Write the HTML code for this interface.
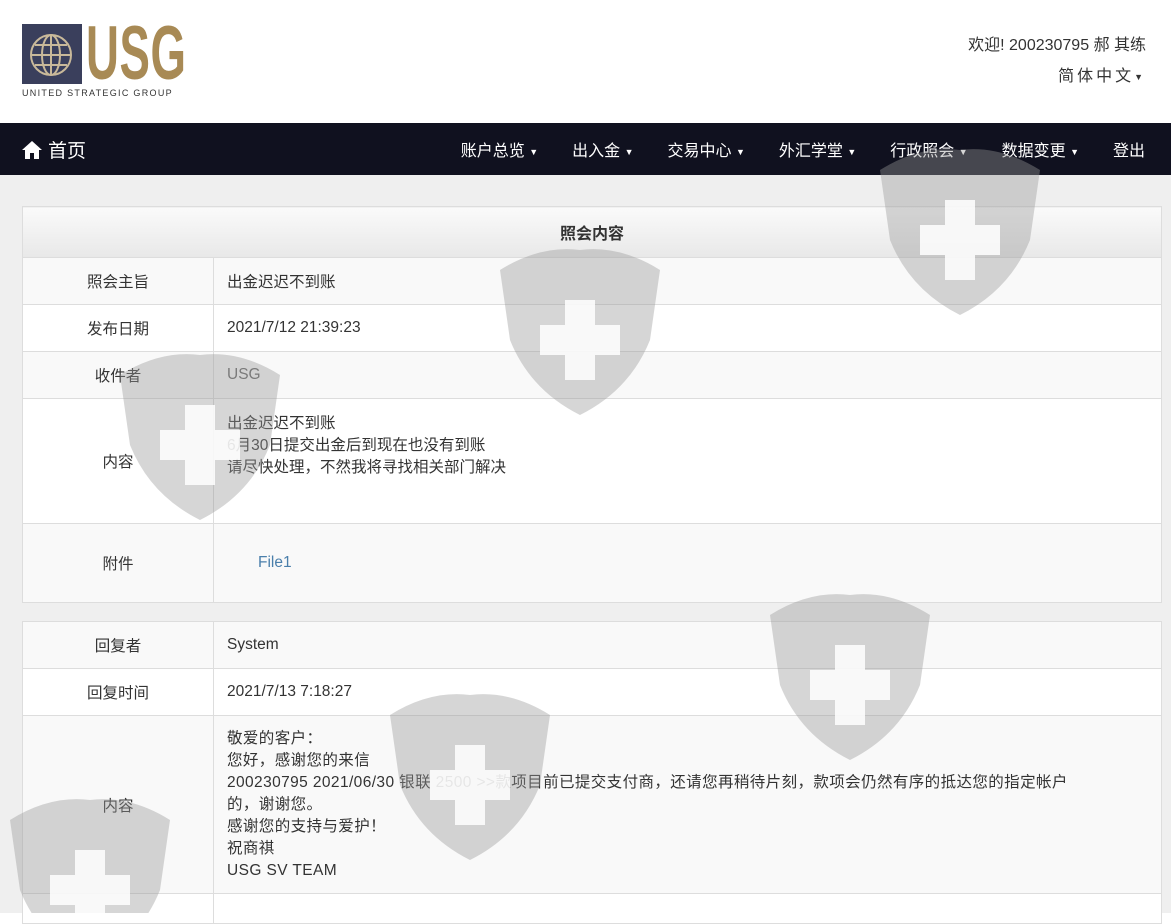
<!DOCTYPE html>
<html><head><meta charset="utf-8"><style>
body{margin:0;width:1171px;height:913px;overflow:hidden;background:#fff;font-family:"Liberation Sans","Noto Sans CJK SC",sans-serif;color:#333;font-size:16px;position:relative}
.top{height:123px;position:relative}
.nav{position:absolute;top:123px;left:0;width:1171px;height:52px;background:#10111f;color:#fff}
.nav .home{position:absolute;left:22px;top:13px;font-size:19px;display:flex;align-items:center;gap:6px}
.nav .menu{position:absolute;right:26px;top:14px;font-size:16px;white-space:nowrap}
.nav .menu span.i{margin-left:34px}
.main{position:absolute;top:175px;left:0;width:1171px;height:738px;background:#efefef}
table{position:absolute;left:22px;width:1140px;border-collapse:collapse;background:#fff;font-size:15.5px;table-layout:fixed}
td{border:1px solid #ddd;padding:0 13px;vertical-align:middle}
td.l{text-align:center;padding:0}
tr.o td{background:#f9f9f9}
th{height:48px;background:linear-gradient(#fafafa,#e8e8e8);border:1px solid #ddd;font-weight:bold;font-size:16px}
.car{font-size:9px;vertical-align:middle}
</style></head><body>
<div class="top">
 <div style="position:absolute;left:22px;top:24px;width:60px;height:60px;background:#3a3f5c"></div>
 <svg style="position:absolute;left:27px;top:31px" width="48" height="48"><g fill="none" stroke="#c9b99a" stroke-width="2"><circle cx="24" cy="24" r="20"/><ellipse cx="24" cy="24" rx="9" ry="20"/><line x1="4" y1="24" x2="44" y2="24"/><line x1="24" y1="4" x2="24" y2="44"/><line x1="8" y1="14" x2="40" y2="14"/><line x1="8" y1="34" x2="40" y2="34"/></g></svg>
 <div style="position:absolute;left:86px;top:12px;font:bold 76px/84px 'Liberation Sans',sans-serif;color:#a88a55;transform:scaleX(.6);transform-origin:left;letter-spacing:1px">USG</div>
 <div style="position:absolute;left:22px;top:88px;font-size:9px;letter-spacing:1.3px;color:#333">UNITED STRATEGIC GROUP</div>
 <div style="position:absolute;right:25px;top:31px;font-size:16px">欢迎! 200230795 郝 其练</div>
 <div style="position:absolute;right:25px;top:62px;font-size:16px;letter-spacing:3px">简体中文<span class="car">▼</span></div>
</div>
<div class="nav">
 <div class="home"><svg width="20" height="18" viewBox="0 0 20 18"><path d="M10 0 L20 9 L17 9 L17 18 L12 18 L12 12 L8 12 L8 18 L3 18 L3 9 L0 9Z" fill="#fff"/></svg>首页</div>
 <div class="menu"><span class="i">账户总览 <span class="car">▼</span></span><span class="i">出入金 <span class="car">▼</span></span><span class="i">交易中心 <span class="car">▼</span></span><span class="i">外汇学堂 <span class="car">▼</span></span><span class="i">行政照会 <span class="car">▼</span></span><span class="i">数据变更 <span class="car">▼</span></span><span class="i">登出</span></div>
</div>
<div class="main">
<table style="top:31px">
<colgroup><col style="width:191px"><col></colgroup>
<tr><th colspan="2">照会内容</th></tr>
<tr class="o" style="height:47px"><td class="l">照会主旨</td><td>出金迟迟不到账</td></tr>
<tr style="height:47px"><td class="l">发布日期</td><td>2021/7/12 21:39:23</td></tr>
<tr class="o" style="height:47px"><td class="l">收件者</td><td style="color:#666">USG</td></tr>
<tr style="height:125px"><td class="l">内容</td><td style="vertical-align:top;padding-top:14px;line-height:22px">出金迟迟不到账<br>6月30日提交出金后到现在也没有到账<br>请尽快处理，不然我将寻找相关部门解决</td></tr>
<tr class="o" style="height:79px"><td class="l">附件</td><td style="padding-left:44px;color:#4a7fab">File1</td></tr>
</table>
<table style="top:446px">
<colgroup><col style="width:191px"><col></colgroup>
<tr class="o" style="height:47px"><td class="l">回复者</td><td>System</td></tr>
<tr style="height:47px"><td class="l">回复时间</td><td>2021/7/13 7:18:27</td></tr>
<tr class="o" style="height:178px"><td class="l">内容</td><td style="line-height:22px;padding-right:20px;letter-spacing:.4px">敬爱的客户：<br>您好，感谢您的来信<br>200230795 2021/06/30 银联 2500 &gt;&gt;款项目前已提交支付商，还请您再稍待片刻，款项会仍然有序的抵达您的指定帐户<br>的，谢谢您。<br>感谢您的支持与爱护！<br>祝商祺<br>USG SV TEAM</td></tr>
<tr style="height:30px"><td class="l"></td><td></td></tr>
</table>
</div>
<svg width="1171" height="913" style="position:absolute;left:0;top:0;pointer-events:none">
<defs><g id="s"><path d="M0 20 Q40 -5 80 0 Q120 -5 160 20 L150 90 Q130 140 80 165 Q30 140 10 90Z" fill="#999" opacity=".4"/><path d="M65 50h30v25h25v30h-25v25h-30v-25h-25v-30h25z" fill="#fff" opacity=".85"/></g></defs>
<use href="#s" x="500" y="250"/><use href="#s" x="880" y="150"/><use href="#s" x="120" y="355"/><use href="#s" x="770" y="595"/><use href="#s" x="390" y="695"/><use href="#s" x="10" y="800"/>
</svg>
</body></html>
